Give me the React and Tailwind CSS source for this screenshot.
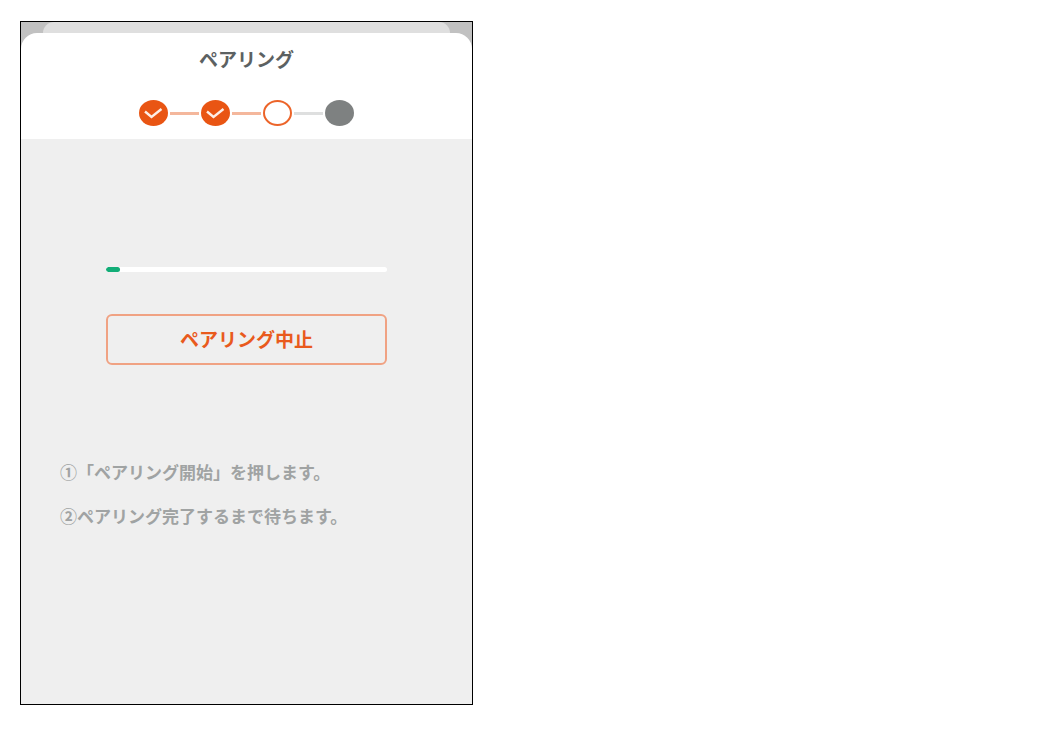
import React from 'react';

const steps = ['done', 'done', 'current', 'upcoming'];

const instructions = [
    '①「ペアリング開始」を押します。',
    '②ペアリング完了するまで待ちます。',
];

function StepMarker({ status }) {
    if (status === 'done') {
        return (
            <svg className="block h-[26px] w-[29px]" viewBox="0 0 29 26" aria-hidden="true">
                <ellipse cx="14.5" cy="13" rx="14.5" ry="13" fill="#e95513" />
                <path d="M6 11.5 L12.5 17 L22.5 9" fill="none" stroke="#fdeee6" strokeWidth="2.4" />
            </svg>
        );
    }
    if (status === 'current') {
        return <div className="h-[26px] w-[29px] rounded-[50%] border-2 border-[#ec6429] bg-white" />;
    }
    return <div className="h-[26px] w-[29px] rounded-[50%] bg-[#7e8181]" />;
}

function Stepper() {
    return (
        <ol className="flex items-center justify-center">
            {steps.map((status, index) => (
                <li key={index} className="flex items-center">
                    {index > 0 && (
                        <div
                            className={`mx-0.5 h-[3px] w-[29px] ${status === 'upcoming' ? 'bg-[#dedfdf]' : 'bg-[#f4b79c]'}`}
                        />
                    )}
                    <StepMarker status={status} />
                </li>
            ))}
        </ol>
    );
}

function ProgressBar({ value }) {
    return (
        <div
            role="progressbar"
            aria-label="ペアリング"
            aria-valuenow={value}
            aria-valuemin={0}
            aria-valuemax={100}
            className="h-[5px] w-full overflow-hidden rounded-full bg-white"
        >
            <div className="h-full rounded-full bg-[#12ad77]" style={{ width: `${value}%` }} />
        </div>
    );
}

export default function App() {
    return (
        <div className="min-h-screen bg-white px-5 py-[21px] font-['Noto_Sans_CJK_JP',sans-serif]">
            <main className="flex min-h-[684px] w-full max-w-[453px] flex-col border border-black bg-[#efefef]">
                <header className="bg-[#c1c1c1]">
                    <div className="mx-[22px] h-[11px] rounded-t-xl bg-[#dfdfdf]" />
                    <div className="rounded-t-2xl bg-white pt-3 pb-[13px]">
                        <h1 className="mb-[27px] text-center text-[19px] leading-7 font-bold text-[#5c6162]">ペアリング</h1>
                        <Stepper />
                    </div>
                </header>
                <section className="px-[85px] pt-32">
                    <ProgressBar value={5} />
                    <button
                        type="button"
                        className="mt-[42px] h-[51px] w-full rounded-md border-2 border-[#f0a283] text-[19px] font-bold text-[#e95a1d]"
                    >
                        ペアリング中止
                    </button>
                </section>
                <section className="flex flex-col gap-5 px-[39px] pt-[95px] text-[17px] leading-6 font-bold text-[#a0a3a3]">
                    {instructions.map((text) => (
                        <p key={text}>{text}</p>
                    ))}
                </section>
            </main>
        </div>
    );
}
